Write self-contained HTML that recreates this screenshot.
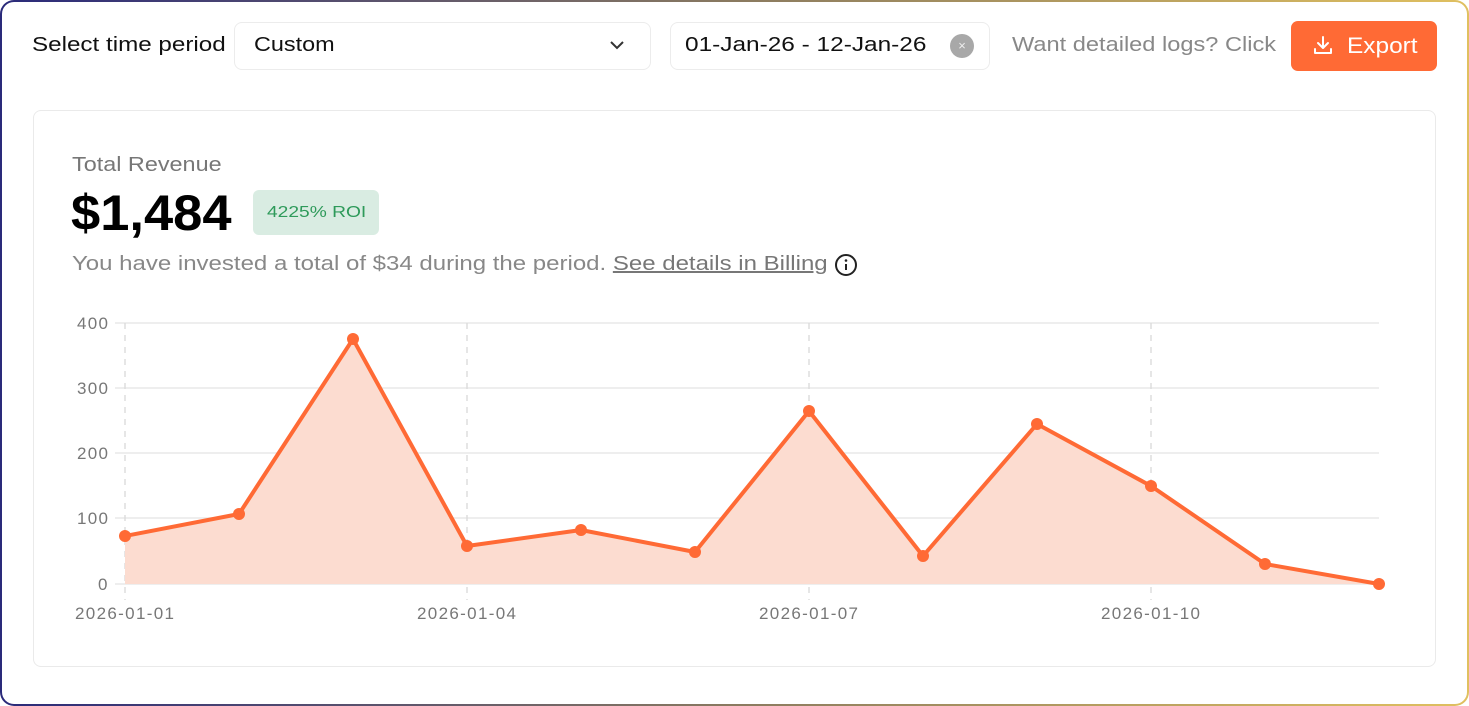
<!DOCTYPE html>
<html><head><style>
html,body{margin:0;padding:0;background:#fff;}
body{width:1469px;height:706px;position:relative;overflow:hidden;font-family:"Liberation Sans",sans-serif;}
.frame{position:absolute;left:0;top:0;width:1469px;height:706px;box-sizing:border-box;border-radius:14px;padding:2px;background:linear-gradient(90deg,#2a2a7a,#8a7a60 50%,#e0c060);}
.inner{width:100%;height:100%;background:#fff;border-radius:12px;}
.abs{position:absolute;white-space:nowrap;transform-origin:0 50%;}
.box{position:absolute;border:1px solid #ececec;border-radius:8px;background:#fff;box-sizing:border-box;}
</style></head><body>
<div class="frame"><div class="inner"></div></div>
<div class="abs" style="left:32px;top:34px;font-size:20px;color:#111;transform:scaleX(1.21)">Select time period</div>
<div class="box" style="left:234px;top:22px;width:417px;height:48px;"></div>
<div class="abs" style="left:254px;top:34px;font-size:20px;color:#111;transform:scaleX(1.17)">Custom</div>
<svg class="abs" style="left:609px;top:39px" width="16" height="12"><path d="M2 3l6 6 6-6" stroke="#333" stroke-width="2" fill="none"/></svg>
<div class="box" style="left:670px;top:22px;width:320px;height:48px;"></div>
<div class="abs" style="left:685px;top:34px;font-size:20px;color:#111;transform:scaleX(1.22)">01-Jan-26 - 12-Jan-26</div>
<div class="abs" style="left:950px;top:34px;width:24px;height:24px;border-radius:50%;background:#a8a8a8;color:#eee;font-size:13px;text-align:center;line-height:24px;">×</div>
<div class="abs" style="left:1012px;top:34px;font-size:20px;color:#888;transform:scaleX(1.18)">Want detailed logs? Click</div>
<div class="abs" style="left:1291px;top:21px;width:146px;height:50px;background:#ff6a35;border-radius:7px;"></div>
<svg class="abs" style="left:1311px;top:34px" width="24" height="24"><path d="M12 3v11M7 9l5 5 5-5M4 15v4h16v-4" stroke="#fff" stroke-width="2" fill="none" stroke-linecap="round" stroke-linejoin="round"/></svg>
<div class="abs" style="left:1347px;top:33px;font-size:22px;color:#fff;transform:scaleX(1.11)">Export</div>

<div class="box" style="left:33px;top:110px;width:1403px;height:557px;border-color:#eaeaea;"></div>
<div class="abs" style="left:72px;top:154px;font-size:20px;color:#777;transform:scaleX(1.17)">Total Revenue</div>
<div class="abs" style="left:71px;top:184px;font-size:50px;font-weight:bold;color:#000;transform:scaleX(1.05)">$1,484</div>
<div class="abs" style="left:253px;top:190px;width:126px;height:45px;background:#d9ece2;border-radius:6px;"></div>
<div class="abs" style="left:267px;top:204px;color:#2e9a5a;font-size:16px;transform:scaleX(1.2)">4225% ROI</div>
<div class="abs" style="left:72px;top:253px;font-size:20px;color:#888;transform:scaleX(1.2)">You have invested a total of $34 during the period. <span style="text-decoration:underline;color:#777">See details in Billing</span></div>
<svg class="abs" style="left:834px;top:253px" width="24" height="24"><circle cx="12" cy="12" r="10" stroke="#222" stroke-width="2" fill="none"/><path d="M12 11v6" stroke="#222" stroke-width="2"/><circle cx="12" cy="7.5" r="1.3" fill="#222"/></svg>

<svg class="abs" style="left:0;top:0" width="1469" height="706">
<g stroke="#e8e8e8" stroke-width="1.5">
<line x1="115" y1="323" x2="1379" y2="323"/><line x1="115" y1="388" x2="1379" y2="388"/><line x1="115" y1="453" x2="1379" y2="453"/><line x1="115" y1="518" x2="1379" y2="518"/><line x1="115" y1="584" x2="1379" y2="584"/>
</g>
<g stroke="#ddd" stroke-width="1.5" stroke-dasharray="6 6">
<line x1="125" y1="323" x2="125" y2="600"/><line x1="467" y1="323" x2="467" y2="600"/><line x1="809" y1="323" x2="809" y2="600"/><line x1="1151" y1="323" x2="1151" y2="600"/>
</g>
<g font-family="Liberation Sans" font-size="17" fill="#777">
<text x="77" y="329" textLength="31">400</text><text x="77" y="394" textLength="31">300</text><text x="77" y="459" textLength="31">200</text><text x="77" y="524" textLength="31">100</text><text x="98" y="590">0</text>
</g>
<g font-family="Liberation Sans" font-size="17" fill="#777">
<text x="75" y="619" textLength="99">2026-01-01</text><text x="417" y="619" textLength="99">2026-01-04</text><text x="759" y="619" textLength="99">2026-01-07</text><text x="1101" y="619" textLength="99">2026-01-10</text>
</g>
<path d="M125 536L239 514L353 339L467 546L581 530L695 552L809 411L923 556L1037 424L1151 486L1265 564L1379 584L1379 584L125 584Z" fill="#fcdcd0"/>
<path d="M125 536L239 514L353 339L467 546L581 530L695 552L809 411L923 556L1037 424L1151 486L1265 564L1379 584" fill="none" stroke="#ff6a35" stroke-width="4" stroke-linejoin="round"/>
<g fill="#ff6a35">
<circle cx="125" cy="536" r="6"/><circle cx="239" cy="514" r="6"/><circle cx="353" cy="339" r="6"/><circle cx="467" cy="546" r="6"/><circle cx="581" cy="530" r="6"/><circle cx="695" cy="552" r="6"/><circle cx="809" cy="411" r="6"/><circle cx="923" cy="556" r="6"/><circle cx="1037" cy="424" r="6"/><circle cx="1151" cy="486" r="6"/><circle cx="1265" cy="564" r="6"/><circle cx="1379" cy="584" r="6"/>
</g>
</svg>
</body></html>
